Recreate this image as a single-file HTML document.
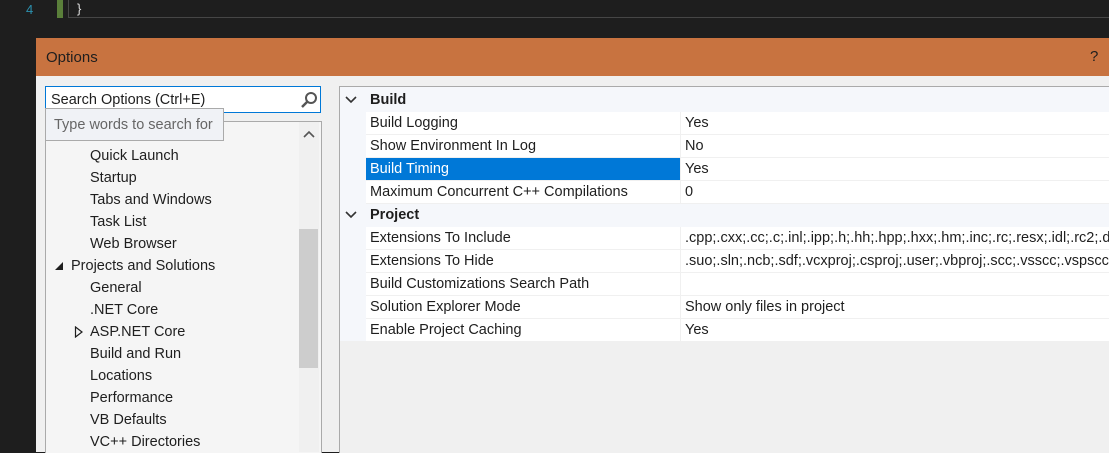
<html><head><style>
body{margin:0;width:1109px;height:452px;overflow:hidden;background:#1e1e1e;font-family:"Liberation Sans",sans-serif;font-size:14.5px;color:#1e1e1e;position:relative}
.a{position:absolute;white-space:nowrap}
.row{position:absolute;left:366px;width:743px;height:22px;background:#fff;border-bottom:1px solid #f0f0f0}
.row span{position:absolute;top:3px;left:4px}
.row span.v{left:319px}
.row .sep{position:absolute;left:314px;top:0;width:1px;height:22px;background:#f0f0f0}
.t{position:absolute;left:90px}
</style></head><body>
<div class="a" style="left:0;top:0;width:1109px;height:22px;background:#1e1e1e"></div>
<div class="a" style="left:26px;top:2px;color:#2b91af;font-size:13px">4</div>
<div class="a" style="left:57px;top:0;width:6px;height:18px;background:#5a7f3a"></div>
<div class="a" style="left:68px;top:0;width:1041px;height:17px;border:1px solid #464646;border-top:none;background:#1e1e1e"></div>
<div class="a" style="left:77px;top:1px;color:#dcdcdc;font-size:13px">}</div>
<div class="a" style="left:36px;top:38px;width:1073px;height:414px;background:#f0f0f0"></div>
<div class="a" style="left:36px;top:38px;width:1073px;height:38px;background:#c87340"></div>
<div class="a" style="left:46px;top:49px;font-size:15px;color:#1e1e1e">Options</div>
<div class="a" style="left:1090px;top:48px;font-size:15px">?</div>
<div class="a" style="left:45px;top:86px;width:274px;height:25px;border:1px solid #0078d7;background:#fff"></div>
<div class="a" style="left:51px;top:92px">Search Options (Ctrl+E)</div>
<svg class="a" style="left:299px;top:90px" width="20" height="20"><circle cx="12" cy="8" r="5" fill="none" stroke="#555" stroke-width="2"/><line x1="8.5" y1="11.5" x2="3" y2="17" stroke="#555" stroke-width="2.5"/></svg>
<div class="a" style="left:45px;top:121px;width:275px;height:331px;border:1px solid #aaa;border-bottom:none;background:#f5f5f5"></div>
<div class="a" style="left:299px;top:122px;width:20px;height:330px;background:#f0f0f0"></div>
<div class="a" style="left:299px;top:229px;width:19px;height:139px;background:#cdcdcd"></div>
<svg class="a" style="left:302px;top:129px" width="14" height="10"><path d="M2 8 L7 3 L12 8" fill="none" stroke="#555" stroke-width="1.6"/></svg>
<div class="a" style="left:45px;top:108px;width:177px;height:31px;border:1px solid #aaa;background:#f0f2f6"></div>
<div class="a" style="left:54px;top:117px;color:#666">Type words to search for</div>
<div class="a" style="left:45px;top:140px;width:254px;height:312px">
<div class="t" style="top:8px;left:45px">Quick Launch</div>
<div class="t" style="top:30px;left:45px">Startup</div>
<div class="t" style="top:52px;left:45px">Tabs and Windows</div>
<div class="t" style="top:74px;left:45px">Task List</div>
<div class="t" style="top:96px;left:45px">Web Browser</div>
<svg class="a" style="left:9px;top:121px" width="10" height="10"><path d="M1 9 L9 9 L9 1Z" fill="#1e1e1e"/></svg>
<div class="t" style="top:118px;left:26px">Projects and Solutions</div>
<div class="t" style="top:140px;left:45px">General</div>
<div class="t" style="top:162px;left:45px">.NET Core</div>
<svg class="a" style="left:29px;top:186px" width="10" height="12"><path d="M1.5 1 L8 6 L1.5 11Z" fill="none" stroke="#1e1e1e" stroke-width="1.2"/></svg>
<div class="t" style="top:184px;left:45px">ASP.NET Core</div>
<div class="t" style="top:206px;left:45px">Build and Run</div>
<div class="t" style="top:228px;left:45px">Locations</div>
<div class="t" style="top:250px;left:45px">Performance</div>
<div class="t" style="top:272px;left:45px">VB Defaults</div>
<div class="t" style="top:294px;left:45px">VC++ Directories</div>
</div>
<div class="a" style="left:339px;top:86px;width:770px;height:366px;border-left:1px solid #aaa;border-top:1px solid #aaa;background:#f0f0f0"></div>
<div class="a" style="left:340px;top:87px;width:769px;height:254px;background:#f5f7fb"></div>
<svg class="a" style="left:345px;top:95px" width="12" height="10"><path d="M1 2 L6 7 L11 2" fill="none" stroke="#333" stroke-width="1.6"/></svg>
<div class="a" style="left:370px;top:92px;font-weight:bold">Build</div>
<div class="row" style="top:112px"><span>Build Logging</span><i class="sep"></i><span class="v">Yes</span></div>
<div class="row" style="top:135px"><span>Show Environment In Log</span><i class="sep"></i><span class="v">No</span></div>
<div class="row" style="top:158px"><div style="position:absolute;left:0;top:0;width:314px;height:22px;background:#0078d7"></div><span style="color:#fff">Build Timing</span><i class="sep"></i><span class="v">Yes</span></div>
<div class="row" style="top:181px"><span>Maximum Concurrent C++ Compilations</span><i class="sep"></i><span class="v">0</span></div>
<svg class="a" style="left:345px;top:210px" width="12" height="10"><path d="M1 2 L6 7 L11 2" fill="none" stroke="#333" stroke-width="1.6"/></svg>
<div class="a" style="left:370px;top:207px;font-weight:bold">Project</div>
<div class="row" style="top:227px"><span>Extensions To Include</span><i class="sep"></i><span class="v">.cpp;.cxx;.cc;.c;.inl;.ipp;.h;.hh;.hpp;.hxx;.hm;.inc;.rc;.resx;.idl;.rc2;.def;.odl</span></div>
<div class="row" style="top:250px"><span>Extensions To Hide</span><i class="sep"></i><span class="v">.suo;.sln;.ncb;.sdf;.vcxproj;.csproj;.user;.vbproj;.scc;.vsscc;.vspscc;.old</span></div>
<div class="row" style="top:273px"><span>Build Customizations Search Path</span><i class="sep"></i><span class="v"></span></div>
<div class="row" style="top:296px"><span>Solution Explorer Mode</span><i class="sep"></i><span class="v">Show only files in project</span></div>
<div class="row" style="top:319px"><span>Enable Project Caching</span><i class="sep"></i><span class="v">Yes</span></div>
</body></html>
